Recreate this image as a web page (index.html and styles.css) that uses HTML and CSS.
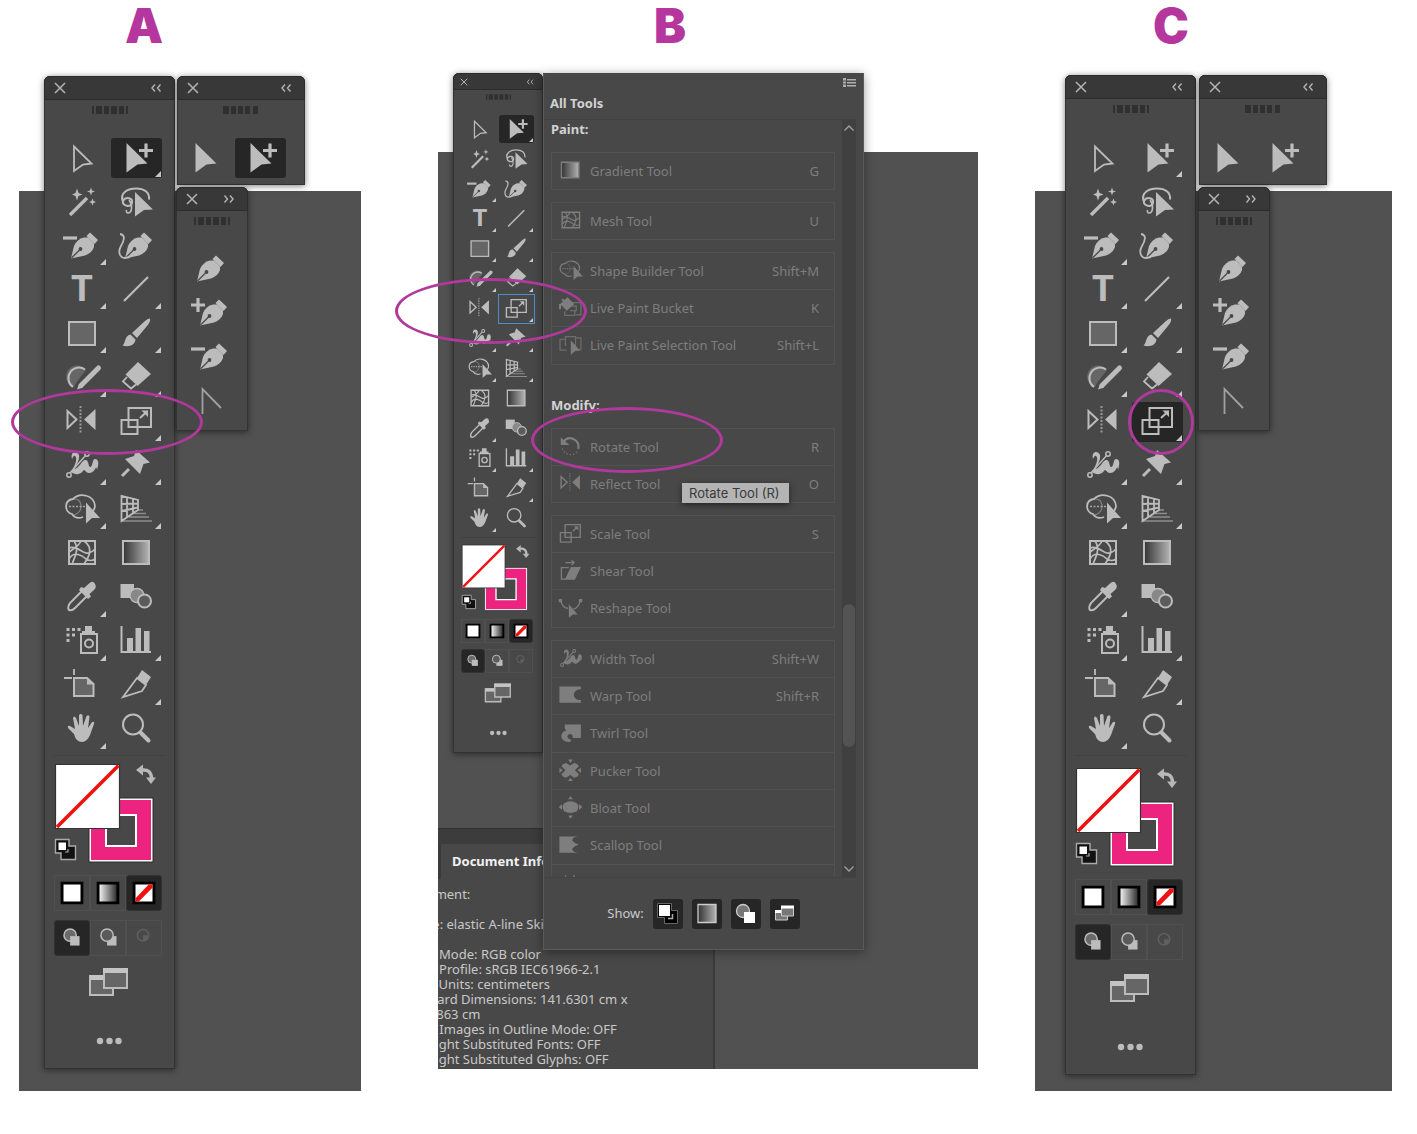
FILE: index.html
```html
<!DOCTYPE html>
<html lang="en">
<head>
<meta charset="utf-8">
<meta name="viewport" content="width=device-width, initial-scale=1">
<title>Finding the Rotate Tool</title>
<link rel="stylesheet" href="styles.css">
</head>
<body>
<svg class="sprite" aria-hidden="true">
  <defs>
    <linearGradient id="ramp"><stop offset="0" stop-color="#333"/><stop offset="1" stop-color="#b4b4b4"/></linearGradient>
    <linearGradient id="ramp-light"><stop offset="0" stop-color="#fff"/><stop offset="1" stop-color="#222"/></linearGradient>
    <g id="nib">
      <path d="M17 34.500L20 22Q23 15 30 13.500L34 13.500L40 19.500L40 23Q38 29 31 31.500Z" fill="currentColor"/>
      <path d="M32.500 12L36 8.500L44 16L40.500 20Z" fill="currentColor"/>
      <path d="M17.500 34L25.500 26" stroke="#484848" stroke-width="1.300"/>
      <circle cx="26.500" cy="25" r="1.900" fill="#484848"/>
    </g>
    <g id="windows">
      <path d="M8 16H31V35H8Z" fill="var(--soft)" stroke="currentColor" stroke-width="2"/>
      <path d="M8 15H31V20H8Z" fill="var(--bright)"/>
      <path d="M22 9H45V28H22Z" fill="var(--soft)" stroke="currentColor" stroke-width="2"/>
      <path d="M21 8H46V13H21Z" fill="var(--bright)"/>
    </g>
  </defs>
  <symbol id="i-close" viewBox="0 0 12 12"><path d="M1 1L11 11M11 1L1 11" stroke="#b4b4b4" stroke-width="1.500"/></symbol>
  <symbol id="i-collapse" viewBox="0 0 12 8"><path d="M5 .500L2 4L5 7.500M10.500 .500L7.500 4L10.500 7.500" fill="none" stroke="#b4b4b4" stroke-width="1.400"/></symbol>
  <symbol id="i-expand" viewBox="0 0 12 8"><path d="M1.500 .500L4.500 4L1.500 7.500M7 .500L10 4L7 7.500" fill="none" stroke="#b4b4b4" stroke-width="1.400"/></symbol>
  <symbol id="i-grip" viewBox="0 0 36 8"><path d="M0 0h2v8h-2zM4 0h6v8h-6zM12 0h5v8h-5zM19 0h6v8h-6zM27 0h5v8h-5zM34 0h2v8h-2z" fill="#303030"/></symbol>
  <symbol id="i-grip-five" viewBox="0 0 36 8"><path d="M0 0h6v8h-6zM8 0h5v8h-5zM15 0h5v8h-5zM22 0h5v8h-5zM30 0h5v8h-5z" fill="#303030"/></symbol>

  <symbol id="i-direct" viewBox="0 0 55 44"><path d="M20 10.500L37.500 27.500L29 28.500L20 35Z" fill="none" stroke="currentColor" stroke-width="1.800"/></symbol>
  <symbol id="i-select" viewBox="0 0 55 44"><path d="M17.500 7L38.500 27.500L28.500 28.500L17.500 36.500Z" fill="currentColor"/></symbol>
  <symbol id="i-group" viewBox="0 0 55 44"><path d="M17.500 7L38.500 27.500L28.500 28.500L17.500 36.500Z" fill="currentColor"/><path d="M37 7.500V21.500M30 14.500H44" stroke="currentColor" stroke-width="3.200"/></symbol>
  <symbol id="i-wand" viewBox="0 0 55 44"><path d="M16 35L33 18" stroke="currentColor" stroke-width="3.400"/><path d="M23 8.500L24.500 13L28.500 14.500L24.500 16L23 20.500L21.500 16L18 14.500L21.500 13ZM37 7.500L38 10.500L41 11.500L38 12.500L37 15.500L36 12.500L33 11.500L36 10.500ZM38.500 18.500L39.500 21L42 22L39.500 23L38.500 25.500L37.500 23L35 22L37.500 21Z" fill="currentColor"/></symbol>
  <symbol id="i-lasso" viewBox="0 0 55 44"><g fill="none" stroke="currentColor" stroke-width="2"><path d="M14 22C10 12 20 8.500 27 8.500C35 8.500 41 12 40 19.500M14 21C17 16 24 18 23 23C22 28 13 26 14 21"/><path d="M20 20C24 25 23 33 19 33Q17 33 17.500 30" stroke-width="1.600"/></g><path d="M26 12L44 29.500L35 30L26 36.500Z" fill="currentColor"/></symbol>
  <symbol id="i-pen" viewBox="0 0 55 44"><use href="#nib"/></symbol>
  <symbol id="i-pen-minus" viewBox="0 0 55 44"><use href="#nib"/><path d="M9 14H23" stroke="currentColor" stroke-width="3.200"/></symbol>
  <symbol id="i-pen-add" viewBox="0 0 55 44"><use href="#nib" x="3"/><path d="M11 14H25M18 7V21" stroke="currentColor" stroke-width="3.200"/></symbol>
  <symbol id="i-pen-remove" viewBox="0 0 55 44"><use href="#nib" x="3"/><path d="M11 14H25" stroke="currentColor" stroke-width="3.200"/></symbol>
  <symbol id="i-anchor" viewBox="0 0 55 44"><path d="M22.500 35V10L41 29" fill="none" stroke="#a0a0a0" stroke-width="1.800"/></symbol>
  <symbol id="i-curve" viewBox="0 0 55 44"><use href="#nib" x="-1"/><path d="M11 10C17 11 15 17 12 22C9 27 10 34 16 34L21 33" fill="none" stroke="currentColor" stroke-width="1.800"/></symbol>
  <symbol id="i-type" viewBox="0 0 55 44"><text x="28" y="33" text-anchor="middle" class="type-glyph">T</text></symbol>
  <symbol id="i-line" viewBox="0 0 55 44"><path d="M15 33L39 9" stroke="currentColor" stroke-width="2.200"/></symbol>
  <symbol id="i-rect" viewBox="0 0 55 44"><path d="M15 10H41V33H15Z" fill="var(--soft)" stroke="currentColor" stroke-width="2"/></symbol>
  <symbol id="i-brush" viewBox="0 0 55 44"><path d="M41 6.500Q42 9 38 14L28 26L23 21L36 9Q39 6 41 6.500ZM21.500 22.500L26.500 27.500C26 33 20 35.500 13.500 33.500C17 31 15 24 21.500 22.500Z" fill="currentColor"/></symbol>
  <symbol id="i-shaper" viewBox="0 0 55 44"><path d="M20 31A11 11 0 1 1 32 14L22 27Z" fill="var(--soft)"/><path d="M19 31A10.500 10.500 0 1 1 31 13.500" fill="none" stroke="currentColor" stroke-width="2"/><path d="M27 29.500L44.500 12" stroke="currentColor" stroke-width="5" stroke-linecap="round"/><path d="M25 28L23 33.500L29 31.500Z" fill="currentColor"/></symbol>
  <symbol id="i-eraser" viewBox="0 0 55 44"><path d="M29 6L42 18L28.500 30L16.500 18.500Z" fill="currentColor"/><path d="M18 21L14 25.500L22 32.500L27 28.500" fill="none" stroke="currentColor" stroke-width="1.800"/></symbol>
  <symbol id="i-reflect" viewBox="0 0 55 44"><path d="M13.500 11V28L22.500 19.500Z" fill="none" stroke="currentColor" stroke-width="2"/><path d="M41.500 9V30L30 19.500Z" fill="currentColor"/><path d="M26.500 6V34" stroke="currentColor" stroke-width="2" stroke-dasharray="2 1.500" opacity=".7"/></symbol>
  <symbol id="i-scale" viewBox="0 0 55 44"><g fill="none" stroke="currentColor" stroke-width="2"><path d="M19.500 8H42V27H19.500ZM12.500 20H28.500V34H12.500ZM31 18L37 12.500"/></g><path d="M32.500 10.500H39V17Z" fill="currentColor"/></symbol>
  <symbol id="i-width" viewBox="0 0 55 44"><path d="M18 15C16 7 23 6 25 11C26 16 22 22 20 25C26 24 28 15 32 16C35 17 34 22 36 23C39 23 38 15 41 15C45 15 45 20 43 26C42 19 42 29 35 29C31 29 31 24 29 27C26 31 21 31 17 28C21 22 24 14 21 12C20 11 19 13 18 15Z" fill="currentColor"/><path d="M15 30L33 10" stroke="currentColor" stroke-width="1.500"/><circle cx="15" cy="31" r="2.200" fill="#484848" stroke="currentColor" stroke-width="1.500"/><circle cx="33" cy="10" r="2.200" fill="#484848" stroke="currentColor" stroke-width="1.500"/></symbol>
  <symbol id="i-pin" viewBox="0 0 55 44"><path d="M27 6L41 18.500L34.500 20L31 30L16 15L25 12Z" fill="currentColor"/><path d="M13 32L20 25" stroke="currentColor" stroke-width="3"/></symbol>
  <symbol id="i-builder" viewBox="0 0 55 44"><path d="M29 29C24 31 20 29 18 26C10 24 10 12 19 11C26 4 40 7 41 18Q41 20 39 23" fill="none" stroke="currentColor" stroke-width="1.800"/><path d="M19 11C28 9 31 24 20 27" fill="none" stroke="currentColor" stroke-width="1.200" opacity=".5"/><path d="M15 18.500H31" stroke="currentColor" stroke-width="1.600" stroke-dasharray="2 1.500" opacity=".8"/><path d="M32 14.500L46 30L38 30L32 35.500Z" fill="currentColor"/></symbol>
  <symbol id="i-perspective" viewBox="0 0 55 44"><g fill="none" stroke="currentColor"><path d="M12.500 8V33L29 22V12ZM18 9V29M24 10.500V25M12.500 16L29 15.500M12.500 23L29 19.500" stroke-width="1.800"/><path d="M29 22H34M25 25.500H37M20 29H40M13 33H43" stroke-width="1.500" opacity=".6"/></g></symbol>
  <symbol id="i-mesh" viewBox="0 0 55 44"><g fill="none" stroke="currentColor" stroke-width="1.700"><path d="M15 9H41V32H15Z" stroke-width="2"/><path d="M15 16C22 13 27 20 32 21Q36 22 41 17M15 27C20 18 29 24 32 27Q37 30 41 27M20 9C25 16 22 23 18 32M30 9C40 16 35 25 30 32M15 20C19 17 25 14 27 9"/></g></symbol>
  <symbol id="i-gradient" viewBox="0 0 55 44"><path d="M14 9H40V32H14Z" fill="url(#ramp)" stroke="currentColor" stroke-width="2"/></symbol>
  <symbol id="i-dropper" viewBox="0 0 55 44"><path d="M28 15L16 27Q13 32 15 34Q18 35 21 32L33 20" fill="none" stroke="currentColor" stroke-width="2"/><path d="M27 11L30 12L35 7.500Q39 4 41 8Q43 11 40 14L35.500 18L37 20.500L34 23L25 14Z" fill="currentColor"/></symbol>
  <symbol id="i-blend" viewBox="0 0 55 44"><path d="M11.500 8H25V22H11.500Z" fill="currentColor"/><circle cx="28" cy="19.500" r="7" fill="#888" stroke="currentColor" stroke-width="1.300"/><circle cx="35.500" cy="25" r="6.500" fill="#5c5c5c" stroke="currentColor" stroke-width="2"/></symbol>
  <symbol id="i-spray" viewBox="0 0 55 44"><path d="M12.500 8h3v3h-3zM18 8h3v3h-3zM23.500 8h3v3h-3zM12.500 13.500h3v3h-3zM18 13.500h3v3h-3zM12.500 19h3v3h-3zM31 6H38V11H41V14H28V11H31Z" fill="currentColor"/><path d="M27 14H43V33H27Z" fill="none" stroke="currentColor" stroke-width="2"/><circle cx="35" cy="23.500" r="4" fill="none" stroke="currentColor" stroke-width="2"/></symbol>
  <symbol id="i-graph" viewBox="0 0 55 44"><path d="M12.500 6V32H42" fill="none" stroke="currentColor" stroke-width="2"/><path d="M18 18h6v13h-6zM26.500 8h5.500v23h-5.500zM35 11h5.500v20h-5.500z" fill="currentColor"/></symbol>
  <symbol id="i-artboard" viewBox="0 0 55 44"><path d="M20 14H33L39.500 20V32H20Z" fill="var(--soft)" stroke="currentColor" stroke-width="2"/><path d="M33 13V20.500H40Z" fill="currentColor"/><path d="M10 14H18M20 5V11" stroke="currentColor" stroke-width="1.800"/></symbol>
  <symbol id="i-slice" viewBox="0 0 55 44"><path d="M14 33L28 14L37 21L33 27Z" fill="none" stroke="currentColor" stroke-width="1.800"/><path d="M33 6L42 13L37 21L28 14Z" fill="currentColor"/></symbol>
  <symbol id="i-hand" viewBox="0 0 55 44"><path d="M20 26L14 20Q13 17 16 18L21 21L19 10Q20 7 22 10L25 18V7Q27 5 28.500 7L29 18L32.500 8Q35 6 35.500 9L34 20L38 14Q41 13 40 16L36 27Q33 34 28 34Q22 34 20 26Z" fill="currentColor"/></symbol>
  <symbol id="i-zoom" viewBox="0 0 55 44"><circle cx="24" cy="16.500" r="10" fill="none" stroke="currentColor" stroke-width="2"/><path d="M31.500 24.500L39.500 32.500" stroke="currentColor" stroke-width="4" stroke-linecap="round"/></symbol>
  <symbol id="i-screen" viewBox="0 0 55 44"><use href="#windows"/></symbol>
  <symbol id="i-more" viewBox="0 0 55 44"><circle cx="18" cy="22" r="3.200" fill="currentColor"/><circle cx="27.500" cy="22" r="3.200" fill="currentColor"/><circle cx="36.500" cy="22" r="3.200" fill="currentColor"/></symbol>

  <symbol id="i-bucket" viewBox="0 0 55 44"><path d="M12 16L23 6L33 16L22 26Z" fill="currentColor"/><path d="M15 9L23 16M12 16V24" stroke="currentColor" stroke-width="3"/><path d="M19 27V33H34V26M26 14H43V32H36M29 19H36V26H27" fill="none" stroke="currentColor" stroke-width="2" opacity=".7"/></symbol>
  <symbol id="i-live-select" viewBox="0 0 55 44"><path d="M22 28H12V12H20M20 22V8H35V22M35 10H43V27H40" fill="none" stroke="currentColor" stroke-width="1.800" opacity=".7"/><path d="M28 14L42 29L35 29L28 35Z" fill="currentColor"/></symbol>
  <symbol id="i-rotate" viewBox="0 0 55 44"><path d="M17 14C26 3 42 12 39 25" fill="none" stroke="currentColor" stroke-width="3"/><path d="M37 29C32 36 19 35 15 24" fill="none" stroke="currentColor" stroke-width="1.800" stroke-dasharray="2 3" opacity=".8"/><path d="M13 8V19H26Z" fill="currentColor"/></symbol>
  <symbol id="i-shear" viewBox="0 0 55 44"><path d="M25 17H14V34H20" fill="none" stroke="currentColor" stroke-width="2"/><path d="M19 35L28 16H43L34 35Z" fill="currentColor"/><path d="M20 9.500H33M29 6L33 9.500L29 13" fill="none" stroke="currentColor" stroke-width="1.800"/></symbol>
  <symbol id="i-reshape" viewBox="0 0 55 44"><path d="M10 7h5v5h-5zM40 7h5v5h-5z" fill="currentColor"/><path d="M13 10Q16 21 24 21M42 10Q39 21 32 22" fill="none" stroke="currentColor" stroke-width="2"/><path d="M25 15L38 30L31 30L25 35Z" fill="currentColor"/></symbol>
  <symbol id="i-warp" viewBox="0 0 55 44"><path d="M11 8H43V12C29 12 29 29 43 28V32H11Z" fill="currentColor"/></symbol>
  <symbol id="i-twirl" viewBox="0 0 55 44"><path d="M19 8H43V28H31C32 22 25 20 23 25C22 29 27 29 29 32C24 37 13 32 14 24Q15 18 21 17Q18 14 19 8Z" fill="currentColor"/></symbol>
  <symbol id="i-pucker" viewBox="0 0 55 44"><path d="M16 12L21 10L27 14L33 10L38 12L40 15L34 21L40 27L38 30L33 32L27 28L21 32L16 30L14 27L20 21L14 15ZM24 5h7l-3.500 5zM24 37h7l-3.500 -5zM11 17v8l5 -4zM43 17v8l-5 -4z" fill="currentColor"/></symbol>
  <symbol id="i-bloat" viewBox="0 0 55 44"><path d="M18 15Q27 9 37 15Q41 20 37 27Q27 32 18 27Q14 20 18 15ZM24 9h7l-3.500 -5zM24 33h7l-3.500 5zM15 16v9l-5 -4.500zM40 16v9l5 -4.500z" fill="currentColor"/></symbol>
  <symbol id="i-scallop" viewBox="0 0 55 44"><path d="M11 8H39Q30 9 30 14Q34 19 40 20Q34 21 30 26Q30 31 39 32H11Z" fill="currentColor"/></symbol>
  <symbol id="i-crystal" viewBox="0 0 55 44"><path d="M20 9L24 19L29 19L33 9L36 22L41 28L33 29L27 36L23 29L13 28L19 23Z" fill="currentColor"/></symbol>

  <symbol id="i-colors" viewBox="0 0 110 106">
    <path d="M35 38H99V102H35Z" fill="#fff" stroke="#2b2b2b" stroke-width="1"/>
    <path d="M37 40H97V100H37Z" fill="#ed247f"/>
    <path d="M52 55H82V86H52Z" fill="#484848" stroke="#fff" stroke-width="2"/>
    <path d="M1.500 4.500H65.500V68.500H1.500Z" fill="#fff" stroke="#333" stroke-width="1.200"/>
    <path d="M3 67L64.500 5.500" stroke="#f01010" stroke-width="3.500"/>
    <path d="M88 10Q97 9 97.500 18" fill="none" stroke="#b8b8b8" stroke-width="3.500"/>
    <path d="M82 10L89 4.500V15.500ZM92 17.500H102L97 24Z" fill="#b8b8b8"/>
    <path d="M1.500 79.500H15V86H21.500V99.500H7V93H1.500Z" fill="#111" stroke="#aaa" stroke-width="1.400"/>
    <path d="M4.500 82.500H12V90H4.500Z" fill="#fff"/><path d="M14 89V92H11" fill="none" stroke="#aaa" stroke-width="1.200"/>
  </symbol>
  <symbol id="i-solid" viewBox="0 0 36 36"><path d="M7.500 7.500H28.500V28.500H7.500Z" fill="#fff" stroke="#000" stroke-width="3"/></symbol>
  <symbol id="i-ramp" viewBox="0 0 36 36"><path d="M7.500 7.500H28.500V28.500H7.500Z" fill="url(#ramp-light)" stroke="#000" stroke-width="3"/></symbol>
  <symbol id="i-none" viewBox="0 0 36 36"><path d="M7.500 7.500H28.500V28.500H7.500Z" fill="#fff" stroke="#000" stroke-width="3"/><path d="M9 23.500L23 9H27V12.500L12.500 27H9Z" fill="#f01010"/></symbol>
  <symbol id="i-normal" viewBox="0 0 36 36"><circle cx="16" cy="15" r="6.500" fill="#6a6a6a" stroke="currentColor" stroke-width="1.600"/><path d="M16 16H26V26H16Z" fill="currentColor"/></symbol>
  <symbol id="i-behind" viewBox="0 0 36 36"><path d="M17 16H27V26H17Z" fill="currentColor"/><circle cx="17" cy="15" r="6.500" fill="#5a5a5a" stroke="currentColor" stroke-width="1.600"/></symbol>
  <symbol id="i-inside" viewBox="0 0 36 36"><circle cx="17" cy="15" r="6" fill="none" stroke="#606060" stroke-width="1.600"/><path d="M17 15H22V18L20 20H17Z" fill="#606060"/></symbol>

  <symbol id="i-menu" viewBox="0 0 13 9"><path d="M0 0h3v2.500h-3zM0 3.500h3v2h-3zM0 6.500h3v2.500h-3zM4 1h9v1.500h-9zM4 4h9v1.500h-9zM4 7h9v1.500h-9z" fill="#b0b0b0"/></symbol>
  <symbol id="i-up" viewBox="0 0 10 6"><path d="M.500 5.500L5 1L9.500 5.500" fill="none" stroke="#a0a0a0" stroke-width="1.300"/></symbol>
  <symbol id="i-down" viewBox="0 0 10 6"><path d="M.500 .500L5 5L9.500 .500" fill="none" stroke="#a0a0a0" stroke-width="1.300"/></symbol>
  <symbol id="i-show-colors" viewBox="0 0 30 30"><path d="M4.500 4.500H18.500V11.500H24.500V24.500H11.500V18.500H4.500Z" fill="#000" stroke="#666"/><path d="M6 6H17V17H6Z" fill="#fff"/><path d="M19.500 15V19.500H15" fill="none" stroke="#aaa" stroke-width="1.500"/></symbol>
  <symbol id="i-show-ramp" viewBox="0 0 30 30"><path d="M6 5.500H24V23.500H6Z" fill="url(#ramp)" stroke="#ccc" stroke-width="1.300"/></symbol>
  <symbol id="i-show-draw" viewBox="0 0 30 30"><circle cx="12" cy="12" r="6.500" fill="#777" stroke="#ccc" stroke-width="1.300"/><path d="M13 13H24V24H13Z" fill="#fff"/></symbol>
  <symbol id="i-show-screen" viewBox="0 0 30 30"><path d="M5.500 11.500H17.500V21H5.500Z" fill="#777" stroke="#ccc"/><path d="M5 11H12V14H5Z" fill="#fff"/><path d="M11.500 7.500H23.500V17H11.500Z" fill="#777" stroke="#ccc"/><path d="M11 6.500H24V9.500H11Z" fill="#fff"/></symbol>
</svg>

<main class="page">
  <figure class="step step-a">
    <figcaption class="letter">A</figcaption>
    <div class="canvas"></div>
    <section class="panel toolbar large" data-selected="group" aria-label="Tools"></section>
    <section class="panel tearoff large selection" data-tools="select group" data-selected="group" aria-label="Selection tools"></section>
    <section class="panel tearoff large pens" data-tools="pen pen-add pen-remove anchor" aria-label="Pen tools"></section>
    <div class="ring"></div>
  </figure>

  <figure class="step step-b">
    <figcaption class="letter">B</figcaption>
    <div class="canvas">
      <section class="info">
        <div class="info-top"></div>
        <h2 class="info-tab">Document Info</h2>
        <div class="info-body">
          <p>Document:</p>
          <p>Name: elastic A-line Skirt</p>
          <p>Color Mode: RGB color<br>Color Profile: sRGB IEC61966-2.1<br>Ruler Units: centimeters<br>Artboard Dimensions: 141.6301 cm x<br>100.1863 cm<br>Show Images in Outline Mode: OFF<br>Highlight Substituted Fonts: OFF<br>Highlight Substituted Glyphs: OFF</p>
        </div>
      </section>
    </div>
    <section class="panel toolbar small" data-selected="group" data-focused="scale" aria-label="Tools"></section>
    <section class="drawer">
      <div class="drawer-menu"><button aria-label="Panel menu"><svg width="13" height="9"><use href="#i-menu"/></svg></button></div>
      <h2 class="drawer-title">All Tools</h2>
      <div class="drawer-scroll">
        <div class="drawer-list">
          <h3>Paint:</h3>
          <ul><li><svg><use href="#i-gradient"/></svg>Gradient Tool<kbd>G</kbd></li></ul>
          <ul><li><svg><use href="#i-mesh"/></svg>Mesh Tool<kbd>U</kbd></li></ul>
          <ul>
            <li><svg><use href="#i-builder"/></svg>Shape Builder Tool<kbd>Shift+M</kbd></li>
            <li><svg><use href="#i-bucket"/></svg>Live Paint Bucket<kbd>K</kbd></li>
            <li><svg><use href="#i-live-select"/></svg>Live Paint Selection Tool<kbd>Shift+L</kbd></li>
          </ul>
          <h3 class="later">Modify:</h3>
          <ul>
            <li><svg><use href="#i-rotate"/></svg>Rotate Tool<kbd>R</kbd></li>
            <li><svg><use href="#i-reflect"/></svg>Reflect Tool<kbd>O</kbd></li>
          </ul>
          <ul>
            <li><svg><use href="#i-scale"/></svg>Scale Tool<kbd>S</kbd></li>
            <li><svg><use href="#i-shear"/></svg>Shear Tool</li>
            <li><svg><use href="#i-reshape"/></svg>Reshape Tool</li>
          </ul>
          <ul>
            <li><svg><use href="#i-width"/></svg>Width Tool<kbd>Shift+W</kbd></li>
            <li><svg><use href="#i-warp"/></svg>Warp Tool<kbd>Shift+R</kbd></li>
            <li><svg><use href="#i-twirl"/></svg>Twirl Tool</li>
            <li><svg><use href="#i-pucker"/></svg>Pucker Tool</li>
            <li><svg><use href="#i-bloat"/></svg>Bloat Tool</li>
            <li><svg><use href="#i-scallop"/></svg>Scallop Tool</li>
            <li><svg><use href="#i-crystal"/></svg></li>
          </ul>
        </div>
        <div class="scrollbar">
          <svg width="10" height="6"><use href="#i-up"/></svg>
          <div class="track"><div class="thumb"></div></div>
          <svg width="10" height="6"><use href="#i-down"/></svg>
        </div>
      </div>
      <div class="drawer-foot">
        <span>Show:</span>
        <button aria-label="Fill and stroke"><svg><use href="#i-show-colors"/></svg></button>
        <button aria-label="Coloring"><svg><use href="#i-show-ramp"/></svg></button>
        <button aria-label="Drawing modes"><svg><use href="#i-show-draw"/></svg></button>
        <button aria-label="Screen modes"><svg><use href="#i-show-screen"/></svg></button>
      </div>
    </section>
    <div class="tooltip" role="tooltip">Rotate Tool (R)</div>
    <div class="ring ring-scale"></div>
    <div class="ring ring-rotate"></div>
  </figure>

  <figure class="step step-c">
    <figcaption class="letter">C</figcaption>
    <div class="canvas"></div>
    <section class="panel toolbar large" data-selected="scale" aria-label="Tools"></section>
    <section class="panel tearoff large selection" data-tools="select group" aria-label="Selection tools"></section>
    <section class="panel tearoff large pens" data-tools="pen pen-add pen-remove anchor" aria-label="Pen tools"></section>
    <div class="ring"></div>
  </figure>
</main>
<script src="panels.js"></script>
</body>
</html>
```

FILE: styles.css
```css
* { box-sizing: border-box; }

body {
  margin: 0;
  background: #fff;
  color: #c8c8c8;
  font: 13px/15px "Noto Sans", "Open Sans", sans-serif;
}

button {
  padding: 0;
  border: 0;
  background: none;
  color: inherit;
  font: inherit;
}

svg { display: block; }
.sprite { position: absolute; width: 0; height: 0; }

.type-glyph {
  font: bold 38px "Liberation Mono", monospace;
  fill: currentColor;
}

/* Three illustrated steps side by side */
.page {
  display: grid;
  grid-template-columns: 362fr 540fr 357fr;
  column-gap: 57px;
  align-items: start;
  min-width: 1280px;
  padding: 0 25px 40px 19px;
}

.step {
  position: relative;
  margin: 0;
}
.step-a { padding-right: 20px; }

.letter {
  height: 152px;
  color: #b5379d;
  font: 900 48px/52px Inter, "DejaVu Sans", sans-serif;
}
.step-a .letter { height: 191px; padding-left: 106px; }
.step-b .letter { padding-left: 216px; }
.step-c .letter { height: 191px; padding-left: 118px; }

.canvas {
  display: flex;
  flex-direction: column;
  justify-content: flex-end;
  min-height: 900px;
  overflow: hidden;
  background: #515151;
}
.step-b .canvas { min-height: 917px; }

/* Floating tool panels */
.panel {
  --soft: #666;
  --bright: #c4c4c4;
  position: absolute;
  border-radius: 6px 6px 0 0;
  background: #484848;
  box-shadow: inset 0 0 0 1px #333, 0 1px 6px rgba(0, 0, 0, .5);
  color: #bcbcbc;
}

.large {
  --cell-w: 55px;
  --cell-h: 44px;
  --bar: 24px;
  --grip-h: 36px;
  --grip-w: 36px;
  --side: 10px;
  --inset: 2px;
  --mark: 6px;
  --mode: 36px;
  --close: 12px;
  --gap: 9px;
}

.small {
  --cell-w: 37px;
  --cell-h: 30px;
  --bar: 17px;
  --grip-h: 24px;
  --grip-w: 25px;
  --side: 8px;
  --inset: 1px;
  --mark: 4px;
  --mode: 24px;
  --close: 8px;
  --gap: 6px;
}

.step-a .toolbar { left: 25px; top: 76px; width: 131px; }
.step-b .toolbar { left: 15px; top: 73px; width: 90px; }
.step-c .toolbar { left: 30px; top: 75px; width: 131px; --grip-h: 37px; }
.step-a .selection { left: 158px; top: 76px; }
.step-a .pens { left: 157px; top: 187px; }
.step-c .selection { left: 164px; top: 75px; --grip-h: 37px; }
.step-c .pens { left: 163px; top: 187px; }
.selection { width: 128px; padding-bottom: 5px; }
.pens { width: 72px; padding-bottom: 8px; }

.panel-bar {
  display: flex;
  align-items: center;
  justify-content: space-between;
  height: var(--bar);
  padding: 0 12px 0 9px;
  border: 1px solid #2c2c2c;
  border-radius: 6px 6px 0 0;
  background: #383838;
}
.small .panel-bar { padding: 0 8px 0 6px; }
.panel-bar svg { width: var(--close); height: var(--close); }

.grip {
  display: flex;
  justify-content: center;
  height: var(--grip-h);
  padding-top: 6px;
}
.small .grip { padding-top: 4px; }
.grip svg { width: var(--grip-w); height: 8px; }
.small .grip svg { height: 6px; }

.tools {
  display: grid;
  grid-template-columns: repeat(2, var(--cell-w));
  padding-left: var(--side);
}
.selection .tools { padding-left: 1px; }
.pens .tools { grid-template-columns: var(--cell-w); padding-left: 4px; }

.tool {
  position: relative;
  width: var(--cell-w);
  height: var(--cell-h);
}
.tool svg {
  position: relative;
  width: var(--cell-w);
  height: var(--cell-h);
}
.tool.selected::before {
  content: "";
  position: absolute;
  inset: var(--inset);
  border-radius: 3px;
  background: #262626;
}
.tool.focused { outline: 1px solid #4d8fcc; outline-offset: -1px; }
.tool.nested::after {
  content: "";
  position: absolute;
  right: calc(var(--inset) + 1px);
  bottom: calc(var(--inset) + 1px);
  border-left: var(--mark) solid transparent;
  border-bottom: var(--mark) solid #c8c8c8;
}

.colors {
  margin: 3px var(--side) 0;
  padding-top: 4px;
  border-top: 1px solid #404040;
}
.step-c .colors { padding-top: 8px; }
.colors svg { width: 110px; height: 106px; }
.small .colors svg { width: 74px; height: 71px; }

.modes {
  display: flex;
  margin: var(--gap) 0 0 var(--side);
}
.mode {
  width: var(--mode);
  height: var(--mode);
  border: 1px solid #505050;
}
.mode svg { width: 100%; height: 100%; }
.mode.selected { border-color: #333; border-radius: 3px; background: #262626; }

.extras {
  display: flex;
  flex-direction: column;
  align-items: center;
  gap: 15px;
  padding: 4px 0 6px;
}
.step-c .extras { padding-top: 6px; }
.small .extras { gap: 10px; padding: 5px 0; }
.extras svg { width: var(--cell-w); height: var(--cell-h); }

/* All Tools drawer */
.drawer {
  position: absolute;
  left: 105px;
  top: 73px;
  width: 321px;
  border: 1px solid #5a5a5a;
  border-top-color: #484848;
  background: #484848;
  box-shadow: 0 2px 10px rgba(0, 0, 0, .4);
}
.drawer-menu {
  display: flex;
  justify-content: flex-end;
  height: 20px;
  padding: 4px 7px 0 0;
}
.drawer-menu button { height: 9px; }
.drawer h2, .drawer h3 {
  margin: 0;
  color: #d2d2d2;
  font-size: 13px;
  line-height: 18px;
}
.drawer .drawer-title { height: 25px; padding-left: 6px; }
.drawer-scroll {
  --soft: #5c5c5c;
  display: flex;
  height: 759px;
  margin-right: 7px;
  border-top: 1px solid #424242;
  border-bottom: 1px solid #424242;
}
.drawer-list {
  flex: 1;
  overflow: hidden;
  padding: 0 7px 0 7px;
}
.drawer h3 { margin-bottom: 14px; }
.drawer .later { margin-top: 31px; }
.drawer-list ul {
  margin: 12px 0 0;
  padding: 0;
  border: 1px solid #525252;
  border-top: 0;
  list-style: none;
}
.drawer-list li {
  display: flex;
  align-items: center;
  height: 37px;
  padding-right: 15px;
  border-top: 1px solid #525252;
  color: #7e7e7e;
}
.drawer-list li:nth-child(3n) { height: 38px; }
.drawer-list li svg { width: 37px; height: 30px; margin-right: 1px; }
.drawer-list kbd { margin-left: auto; font: inherit; }

.scrollbar {
  display: flex;
  flex-direction: column;
  align-items: center;
  width: 14px;
  padding: 5px 0;
  background: #404040;
}
.track { flex: 1; width: 12px; padding-top: 473px; }
.thumb { height: 143px; border-radius: 6px; background: #535353; }

.drawer-foot {
  display: flex;
  align-items: center;
  justify-content: center;
  gap: 9px;
  height: 71px;
}
.drawer-foot button { border-radius: 3px; background: #262626; }
.drawer-foot svg { width: 30px; height: 30px; }

.tooltip {
  position: absolute;
  left: 244px;
  top: 483px;
  padding: 0 9px 0 7px;
  background: #b4b4b4;
  box-shadow: 0 2px 6px rgba(0, 0, 0, .5);
  color: #3a3a3a;
  font: 13px/20px Inter, sans-serif;
  white-space: nowrap;
}

/* Document Info panel, running off the left edge of the canvas */
.info {
  width: 277px;
  border-top: 1px solid #303030;
  border-right: 2px solid #3a3a3a;
  background: #484848;
}
.info-top { height: 15px; background: #3c3c3c; }
.info-tab {
  margin: 0;
  padding-left: 11px;
  border-left: 3px solid #3a3a3a;
  color: #f2f2f2;
  font-size: 13px;
  line-height: 35px;
}
.info-body {
  margin-left: -35px;
  padding: 8px 0 2px;
  white-space: nowrap;
}
.info-body p { margin: 0 0 15px; }
.info-body p:last-child { margin: 0; }

/* Hand-drawn style highlights */
.ring {
  position: absolute;
  width: 192px;
  height: 66px;
  border: 3px solid #b0399b;
  border-radius: 50%;
  pointer-events: none;
}
.step-a .ring { left: -8px; top: 389px; }
.ring-scale { left: -43px; top: 278px; }
.ring-rotate { left: 93px; top: 407px; }
.step-c .ring { left: 93px; top: 389px; width: 66px; }
```

FILE: panels.js
```js
// Tools in grid order; a trailing "*" marks a tool with nested variants.
const TOOLS = ("direct group* wand lasso pen-minus* curve type* line* rect* brush* shaper* eraser* " +
  "reflect scale* width* pin* builder* perspective* mesh gradient dropper* blend spray* graph* " +
  "artboard slice* hand* zoom").split(" ");

const icon = (name) => `<svg aria-hidden="true"><use href="#i-${name}"/></svg>`;

const bar = (arrow, grip) => `
  <div class="panel-bar">
    <button aria-label="Close">${icon("close")}</button>
    <button aria-label="${arrow}">${icon(arrow)}</button>
  </div>
  <div class="grip">${icon(grip)}</div>`;

function toolGrid(tools, panel) {
  return `<div class="tools">${tools.map((entry) => {
    const name = entry.replace("*", "");
    const classes = ["tool"];
    if (entry.endsWith("*")) classes.push("nested");
    if (name === panel.dataset.selected) classes.push("selected");
    if (name === panel.dataset.focused) classes.push("focused");
    return `<button class="${classes.join(" ")}" aria-label="${name}">${icon(name)}</button>`;
  }).join("")}</div>`;
}

function modes(names, selected) {
  return `<div class="modes">${names.map((name) =>
    `<button class="mode${name === selected ? " selected" : ""}" aria-label="${name}">${icon(name)}</button>`
  ).join("")}</div>`;
}

document.querySelectorAll(".toolbar").forEach((panel) => {
  panel.innerHTML = bar("collapse", "grip") + toolGrid(TOOLS, panel) +
    `<div class="colors">${icon("colors")}</div>` +
    modes(["solid", "ramp", "none"], "none") +
    modes(["normal", "behind", "inside"], "normal") +
    `<div class="extras"><button aria-label="Screen mode">${icon("screen")}</button>
     <button aria-label="Edit toolbar">${icon("more")}</button></div>`;
});

document.querySelectorAll(".tearoff").forEach((panel) => {
  const pens = panel.classList.contains("pens");
  panel.innerHTML = bar(pens ? "expand" : "collapse", pens ? "grip" : "grip-five") +
    toolGrid(panel.dataset.tools.split(" "), panel);
});
```
